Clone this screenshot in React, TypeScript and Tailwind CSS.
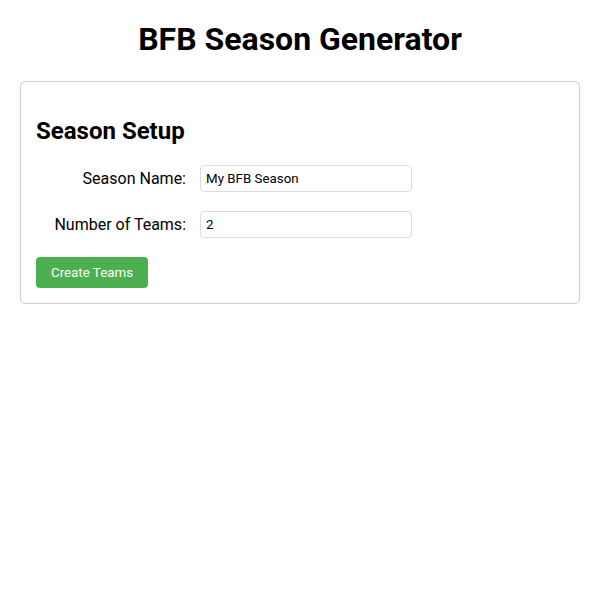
export default function App() {
  return (
    <div className="min-h-[600px] bg-white px-5 text-black" style={{ fontFamily: "Roboto, 'Noto Sans', sans-serif" }}>
      <h1 className="m-0 pt-[21px] pb-[23px] text-center text-[32px] font-bold leading-[37px]">BFB Season Generator</h1>
      <div className="rounded-[5px] border border-[#cccccc] px-[15px] pt-[15px] pb-[15px]">
        <h2 className="mt-5 mb-5 text-2xl font-bold leading-7">Season Setup</h2>
        <div className="mb-[19px] flex items-center">
          <label className="w-[150px] pr-0 text-right text-base leading-5">Season Name:</label>
          <input
            className="ml-[14px] h-[27px] w-[212px] rounded-[4px] border border-[#dddddd] px-[5px] text-[13.33px] outline-none"
            defaultValue="My BFB Season"
          />
        </div>
        <div className="mb-[19px] flex items-center">
          <label className="w-[150px] text-right text-base leading-5">Number of Teams:</label>
          <input
            className="ml-[14px] h-[27px] w-[212px] rounded-[4px] border border-[#dddddd] px-[5px] text-[13.33px] outline-none"
            defaultValue="2"
          />
        </div>
        <button className="h-[31px] w-[112px] rounded-[4px] bg-[#4caf50] text-[13.33px] text-white">Create Teams</button>
      </div>
    </div>
  );
}
